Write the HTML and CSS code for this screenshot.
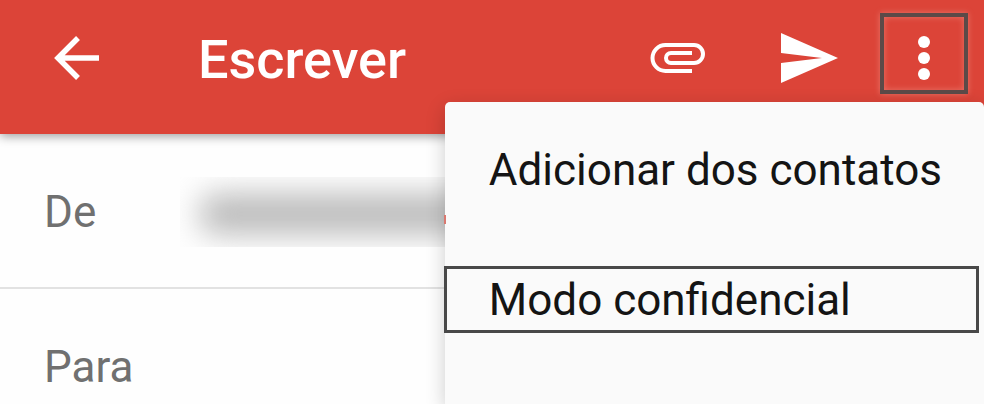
FILE: index.html
```html
<!DOCTYPE html>
<html lang="pt-BR">
<head>
    <meta charset="UTF-8">
    <title>Escrever</title>
    <meta name="viewport" content="width=device-width, initial-scale=1">
    <link rel="stylesheet" href="styles.css">
</head>
<body>
<header class="toolbar">
    <button class="icon-button" type="button" aria-label="Voltar">
        <svg width="46" height="46" viewBox="0 0 46 46" fill="none" stroke="currentColor" stroke-width="5.500">
            <path d="M45 23H5M24 3L4 23l20 20"/>
        </svg>
    </button>
    <h1>Escrever</h1>
    <button class="icon-button" type="button" aria-label="Anexar">
        <svg width="56" height="32" viewBox="0 0 56 32" fill="none" stroke="currentColor" stroke-width="4">
            <path d="M42 29H15.500A13 13 0 0 1 15.500 3H44a9 9 0 0 1 0 18H21a5 5 0 0 1 0-10h21"/>
        </svg>
    </button>
    <button class="icon-button send" type="button" aria-label="Enviar">
        <svg width="58" height="50" viewBox="0 0 58 50" fill="currentColor">
            <path d="M0 0l57 25L0 50V30l41-5L0 20z"/>
        </svg>
    </button>
    <button class="icon-button more" type="button" aria-label="Mais opções" aria-haspopup="menu" aria-expanded="true">
        <svg width="14" height="46" viewBox="0 0 14 46" fill="currentColor">
            <circle cx="7" cy="7" r="6"/>
            <circle cx="7" cy="23" r="6"/>
            <circle cx="7" cy="39" r="6"/>
        </svg>
    </button>
    <div class="menu" role="menu">
        <button class="menu-item" type="button" role="menuitem">Adicionar dos contatos</button>
        <button class="menu-item marked" type="button" role="menuitem">Modo confidencial</button>
    </div>
</header>
<form class="message">
    <div class="field">
        <span class="field-name">De</span>
        <div class="sender"></div>
    </div>
    <div class="field">
        <label class="field-name" for="to">Para</label>
        <input id="to" type="email">
    </div>
</form>
</body>
</html>
```

FILE: styles.css
```css
* {
    box-sizing: border-box;
}

body {
    display: flex;
    flex-direction: column;
    height: 100vh;
    margin: 0;
    background-color: #fefefe;
    font-family: Roboto, sans-serif;
    font-size: 44px;
    line-height: 52px;
}

button,
input {
    padding: 0;
    border: 0;
    background: none;
    font: inherit;
    color: inherit;
}

.toolbar {
    position: relative;
    z-index: 1;
    display: flex;
    flex-shrink: 0;
    align-items: flex-start;
    height: 134px;
    padding: 13px 16px 0 54px;
    background-color: #dc4438;
    box-shadow: 0 2px 10px rgba(0, 0, 0, 0.4);
    color: #fff;
}

.toolbar h1 {
    flex: 1;
    margin: 0 0 0 98px;
    font-size: 54px;
    font-weight: 500;
    line-height: 94px;
}

.icon-button {
    display: flex;
    align-items: center;
    justify-content: center;
    height: 89px;
}

.send {
    margin: 0 41px 0 75px;
}

.more {
    width: 88px;
    height: 81px;
    border: 4px solid #5c4a48;
    box-shadow: 0 0 6px rgba(255, 190, 180, 0.4), inset 0 0 6px rgba(255, 190, 180, 0.4);
}

.more svg {
    margin-top: 8px;
}

.menu {
    position: absolute;
    top: 102px;
    right: 0;
    display: flex;
    flex-direction: column;
    gap: 63px;
    height: calc(100vh - 102px);
    padding-top: 34px;
    border-radius: 5px 5px 0 0;
    background-color: #fafafa;
    box-shadow: 0 6px 20px rgba(0, 0, 0, 0.2);
    color: #141414;
}

/* sliver of the sender chip showing at the menu edge */
.menu::before {
    content: "";
    position: absolute;
    top: 113px;
    left: -1px;
    width: 2px;
    height: 9px;
    background-color: #d9786f;
}

.menu-item {
    height: 67px;
    padding: 0 42px 0 44px;
    text-align: left;
    white-space: nowrap;
}

.marked {
    margin: 0 5px 0 -1px;
    padding-left: 42px;
    border: 3px solid #484848;
}

.message {
    flex: 1;
    min-height: 0;
    overflow: hidden;
}

.field {
    display: flex;
    align-items: center;
    height: 155px;
    padding: 2px 0 0 44px;
    border-bottom: 2px solid #e2e2e2;
    color: #707070;
}

.field-name {
    width: 136px;
}

.field input {
    flex: 1;
    min-width: 0;
    outline: 0;
}

/* obscured address */
.sender {
    flex: 1;
    height: 70px;
    padding: 17px 0 13px 20px;
    overflow: hidden;
}

.sender::before {
    content: "";
    display: block;
    height: 40px;
    border-radius: 16px;
    background-color: #bababa;
    filter: blur(15px);
}
```
